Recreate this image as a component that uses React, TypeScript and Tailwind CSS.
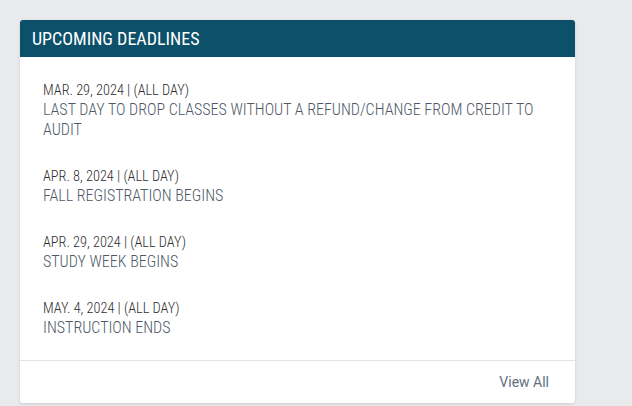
const deadlines = [
  {
    date: "MAR. 29, 2024",
    title: "LAST DAY TO DROP CLASSES WITHOUT A REFUND/CHANGE FROM CREDIT TO AUDIT",
  },
  { date: "APR. 8, 2024", title: "FALL REGISTRATION BEGINS" },
  { date: "APR. 29, 2024", title: "STUDY WEEK BEGINS" },
  { date: "MAY. 4, 2024", title: "INSTRUCTION ENDS" },
];

const condensed = {
  fontFamily: '"Roboto Condensed", "Liberation Sans Narrow", "DejaVu Sans Condensed", Roboto, sans-serif',
};

export default function App() {
  return (
    <div className="h-[406px] w-[632px] bg-[#e9eaec] pt-5 pl-5">
      <div className="w-[555px] rounded-[3px] bg-white shadow-[0_1px_3px_rgba(0,0,0,0.12)] overflow-hidden">
        {/* Header */}
        <div className="flex h-[37px] items-center bg-[#0c506a] px-3">
          <h2 className="text-[18px] font-normal text-white" style={condensed}>
            UPCOMING DEADLINES
          </h2>
        </div>

        {/* List */}
        <div className="flex flex-col gap-[26px] px-[23px] pt-[23px] pb-[22px]">
          {deadlines.map((d) => (
            <div key={d.date} style={condensed}>
              <div className="text-[14.3px] font-light leading-5 text-[#2e2e2e]">
                {d.date} | (ALL DAY)
              </div>
              <div className="text-[16px] font-light leading-5 text-[#4e5866]">
                {d.title}
              </div>
            </div>
          ))}
        </div>

        {/* Footer */}
        <div className="flex h-[43px] items-center justify-end border-t border-[#e4e4e4] pr-[26px]">
          <a
            className="text-[14px] text-[#5f6f80]"
            style={{ fontFamily: "Roboto, sans-serif" }}
          >
            View All
          </a>
        </div>
      </div>
    </div>
  );
}
